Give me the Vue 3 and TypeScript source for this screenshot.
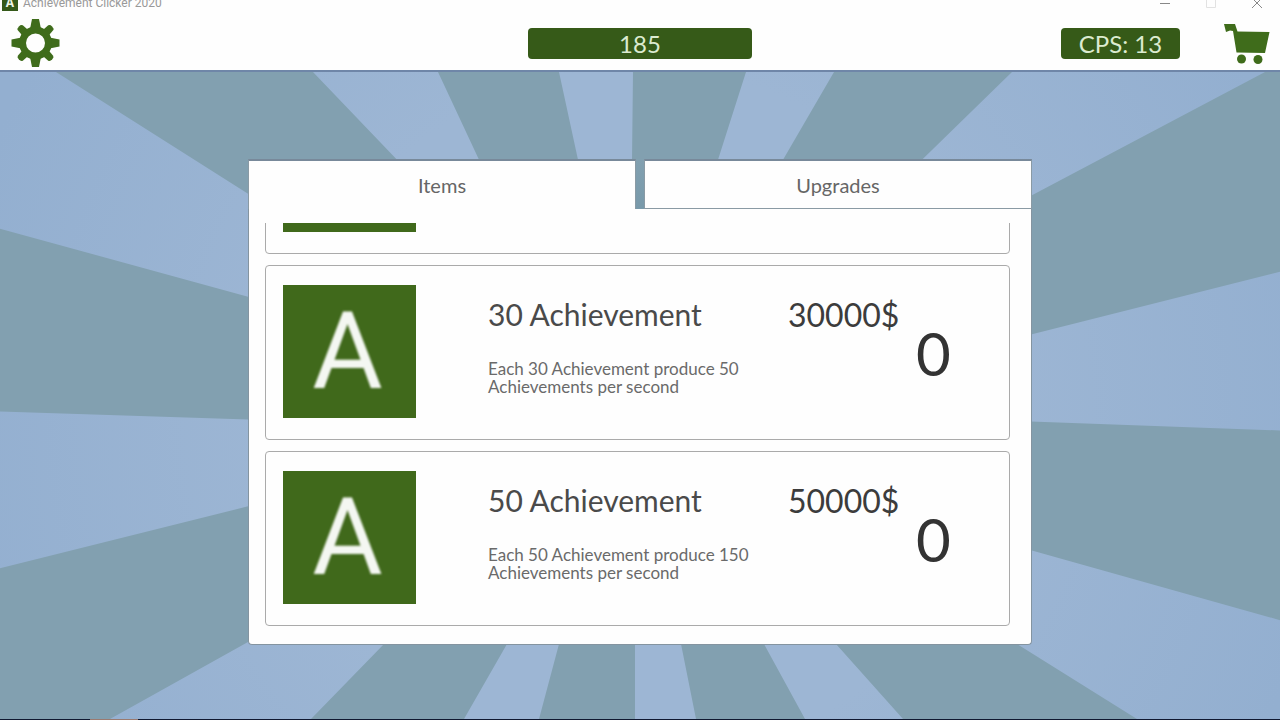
<script setup lang="ts">
import { ref } from 'vue'

interface Item {
  size: number
  rate: number
  price: number
  owned: number
}

const points = ref(185)
const cps = ref(13)
const activeTab = ref('Items')
const tabs = ['Items', 'Upgrades']
const items: Item[] = [
  { size: 20, rate: 20, price: 20000, owned: 0 },
  { size: 30, rate: 50, price: 30000, owned: 0 },
  { size: 50, rate: 150, price: 50000, owned: 0 },
]

const rays = [
  '0,0 56,0 248,122 638,345 248,225 0,157',
  '0,340 248,348 638,355 248,435 0,497',
  '110,648 248,571 638,345 384,573 311,648',
  '464,648 507,573 638,345 559,573 539,648',
  '635,648 635,573 638,345 681,573 696,648',
  '805,648 764,573 638,345 836,573 903,648',
  '1137,648 1017,573 638,355 1031,479 1280,549 1280,648',
  '1280,359 1031,350 638,345 1031,263 1280,200',
  '1265,0 1031,124 638,345 922,88 1012,0',
  '834,0 783,88 638,345 718,88 746,0',
  '633,0 632,88 638,345 578,88 559,0',
  '438,0 479,88 638,345 397,88 313,0',
]
const straightTeeth = [0, 90, 180, 270]
const diagonalTeeth = [45, 135, 225, 315]
</script>

<template>
  <div class="page">
    <header class="header">
      <div class="titlebar">
        <span class="app-icon">A</span>
        <span class="app-title">Achievement Clicker 2020</span>
        <div class="window-buttons">
          <button type="button" aria-label="Minimize">
            <svg width="12" height="12" viewBox="0 0 12 12"><path d="M1 6.500H11" /></svg>
          </button>
          <button type="button" aria-label="Maximize" class="faint">
            <svg width="12" height="12" viewBox="0 0 12 12"><path d="M1.500 1.500H10.500V10.500H1.500Z" /></svg>
          </button>
          <button type="button" aria-label="Close">
            <svg width="12" height="12" viewBox="0 0 12 12"><path d="M1 1L11 11M11 1L1 11" /></svg>
          </button>
        </div>
      </div>
      <div class="toolbar">
        <div class="side">
          <button type="button" class="tool" aria-label="Settings">
            <svg width="50" height="50" viewBox="-25.500 -25 50 50">
              <g fill="#3f6c1b">
                <path v-for="a in straightTeeth" :key="a" d="M-5.500 -14L-3.500 -24H3.500L5.500 -14Z" :transform="`rotate(${a})`" />
                <path v-for="a in diagonalTeeth" :key="a" d="M-4 -14L-3.500 -21.500Q-3 -23.500 0 -23.500Q3 -23.500 3.500 -21.500L4 -14Z" :transform="`rotate(${a})`" />
                <path fill-rule="evenodd" d="M0 -16.500A16.500 16.500 0 1 1 0 16.500A16.500 16.500 0 1 1 0 -16.500ZM0 -9.500A9.500 9.500 0 1 0 0 9.500A9.500 9.500 0 1 0 0 -9.500Z" />
              </g>
            </svg>
          </button>
        </div>
        <div class="badge score">{{ points }}</div>
        <div class="side right">
          <div class="badge cps">CPS: {{ cps }}</div>
          <button type="button" class="tool" aria-label="Shop">
            <svg width="48" height="42" viewBox="0 0 48 42">
              <path fill="#3f6c1b" d="M2 2H13L15.500 9.500L47.500 10L43 31L14.500 30.500L11 9L8 8.500L4 10Z" />
              <circle cx="19.500" cy="37" r="4.500" fill="#3f6c1b" />
              <circle cx="36" cy="37.500" r="4.500" fill="#3f6c1b" />
            </svg>
          </button>
        </div>
      </div>
    </header>

    <main class="stage">
      <svg class="burst" viewBox="0 0 1280 648" preserveAspectRatio="none" aria-hidden="true">
        <defs>
          <radialGradient id="ray" gradientUnits="userSpaceOnUse" cx="638" cy="345" r="700">
            <stop offset="0.500" stop-color="#9db6d4" />
            <stop offset="1" stop-color="#93afd0" />
          </radialGradient>
        </defs>
        <rect width="1280" height="648" fill="#82a0b0" />
        <polygon v-for="r in rays" :key="r" :points="r" fill="url(#ray)" />
      </svg>

      <section class="panel">
        <div class="tabs" role="tablist">
          <button
            v-for="t in tabs"
            :key="t"
            type="button"
            role="tab"
            class="tab"
            :class="{ active: t === activeTab }"
            :aria-selected="t === activeTab"
            @click="activeTab = t"
          >{{ t }}</button>
        </div>
        <div class="body">
          <div class="list">
            <article v-for="item in items" :key="item.size" class="card">
              <div class="thumb"><span>A</span></div>
              <div class="info">
                <h2>{{ item.size }} Achievement</h2>
                <p>Each {{ item.size }} Achievement produce {{ item.rate }}<br>Achievements per second</p>
              </div>
              <div class="price">{{ item.price }}$</div>
              <div class="owned">{{ item.owned }}</div>
            </article>
          </div>
        </div>
      </section>
    </main>
    <footer class="edge"><span></span></footer>
  </div>
</template>

<style>
body {
  margin: 0;
}
</style>

<style scoped>
* {
  box-sizing: border-box;
}
.page {
  display: flex;
  flex-direction: column;
  height: 100vh;
  overflow: hidden;
  font-family: Lato, "Open Sans", sans-serif;
  color: #4a4a4a;
}
button {
  padding: 0;
  border: 0;
  background: none;
  font: inherit;
  color: inherit;
  cursor: pointer;
}
svg {
  display: block;
}
.header {
  flex: none;
  background: #fefefe;
  border-bottom: 2px solid #6f86a8;
}
.titlebar {
  display: flex;
  align-items: flex-end;
  height: 11px;
  padding: 0 17px 0 2px;
  overflow: hidden;
}
.app-icon {
  width: 16px;
  height: 16px;
  margin-right: 5px;
  background: #35591a;
  color: #eef5e8;
  font: 700 12px/16px "Open Sans", sans-serif;
  text-align: center;
}
.app-title {
  font: 12px/16px Roboto, "Open Sans", sans-serif;
  color: #999;
}
.window-buttons {
  display: flex;
  gap: 34px;
  margin-left: auto;
  padding-bottom: 2px;
}
.window-buttons path {
  fill: none;
  stroke: #888;
}
.window-buttons .faint path {
  stroke: #e2e2e2;
}
.toolbar {
  display: grid;
  grid-template-columns: 1fr 224px 1fr;
  align-items: center;
  height: 59px;
  padding: 5px 10px 0;
}
.side {
  display: flex;
  align-items: center;
}
.right {
  justify-content: flex-end;
  gap: 42px;
}
.badge {
  height: 31px;
  border-radius: 4px;
  background: #365a18;
  color: #dcebd0;
  font-size: 24px;
  line-height: 32px;
  text-align: center;
}
.cps {
  width: 119px;
}
.stage {
  position: relative;
  flex: 1;
  min-height: 0;
  display: grid;
  grid-template-columns: 31fr 98fr 31fr;
  padding: 87px 0 74px;
}
.burst {
  position: absolute;
  inset: 0;
  width: 100%;
  height: 100%;
}
.panel {
  position: relative;
  grid-column: 2;
  display: flex;
  flex-direction: column;
  min-height: 0;
}
.tabs {
  display: grid;
  grid-template-columns: 1fr 1fr;
  gap: 8px;
  height: 50px;
  background: linear-gradient(#82a0b0, #7899aa);
}
.tab {
  border: 1px solid #8a9aa4;
  border-top: 2px solid #78899a;
  background: #fefefe;
  font-size: 20px;
  color: #666;
}
.tab.active {
  border-bottom: 0;
}
.body {
  flex: 1;
  min-height: 0;
  display: flex;
  padding: 14px 21px 18px 16px;
  background: #fefefe;
  border: 1px solid #8494a0;
  border-top: 0;
  border-radius: 0 0 4px 4px;
}
.list {
  flex: 1;
  min-width: 0;
  display: flex;
  flex-direction: column;
  justify-content: flex-end;
  gap: 11px;
  overflow: hidden;
}
.card {
  flex: none;
  display: grid;
  grid-template-columns: 133px 372fr 128fr 93fr;
  height: 175px;
  padding: 19px 0 0 17px;
  border: 1px solid #aaa;
  border-radius: 4px;
}
.thumb {
  height: 133px;
  padding-right: 4px;
  overflow: hidden;
  background: #40691b;
  color: #f4f7f2;
  font: 108px/133px Roboto, "Open Sans", sans-serif;
  text-align: center;
}
.thumb span {
  display: block;
  filter: blur(1px);
}
.info {
  min-width: 0;
  margin-left: 72px;
  white-space: nowrap;
}
.info,
.price {
  padding-top: 12px;
}
h2 {
  margin: 0;
  font-size: 30px;
  font-weight: 400;
  line-height: 34px;
}
p {
  margin: 29px 0 0;
  font-size: 17px;
  line-height: 18px;
  color: #6a6a6a;
}
.price {
  font-size: 32px;
  line-height: 36px;
  color: #3c3c3c;
}
.owned {
  padding-top: 32px;
  font-size: 60px;
  line-height: 72px;
  color: #333;
}
.edge {
  flex: none;
  height: 1px;
  background: #101830;
}
.edge span {
  display: block;
  width: 48px;
  height: 1px;
  margin-left: 90px;
  background: #9a7a70;
}
</style>
